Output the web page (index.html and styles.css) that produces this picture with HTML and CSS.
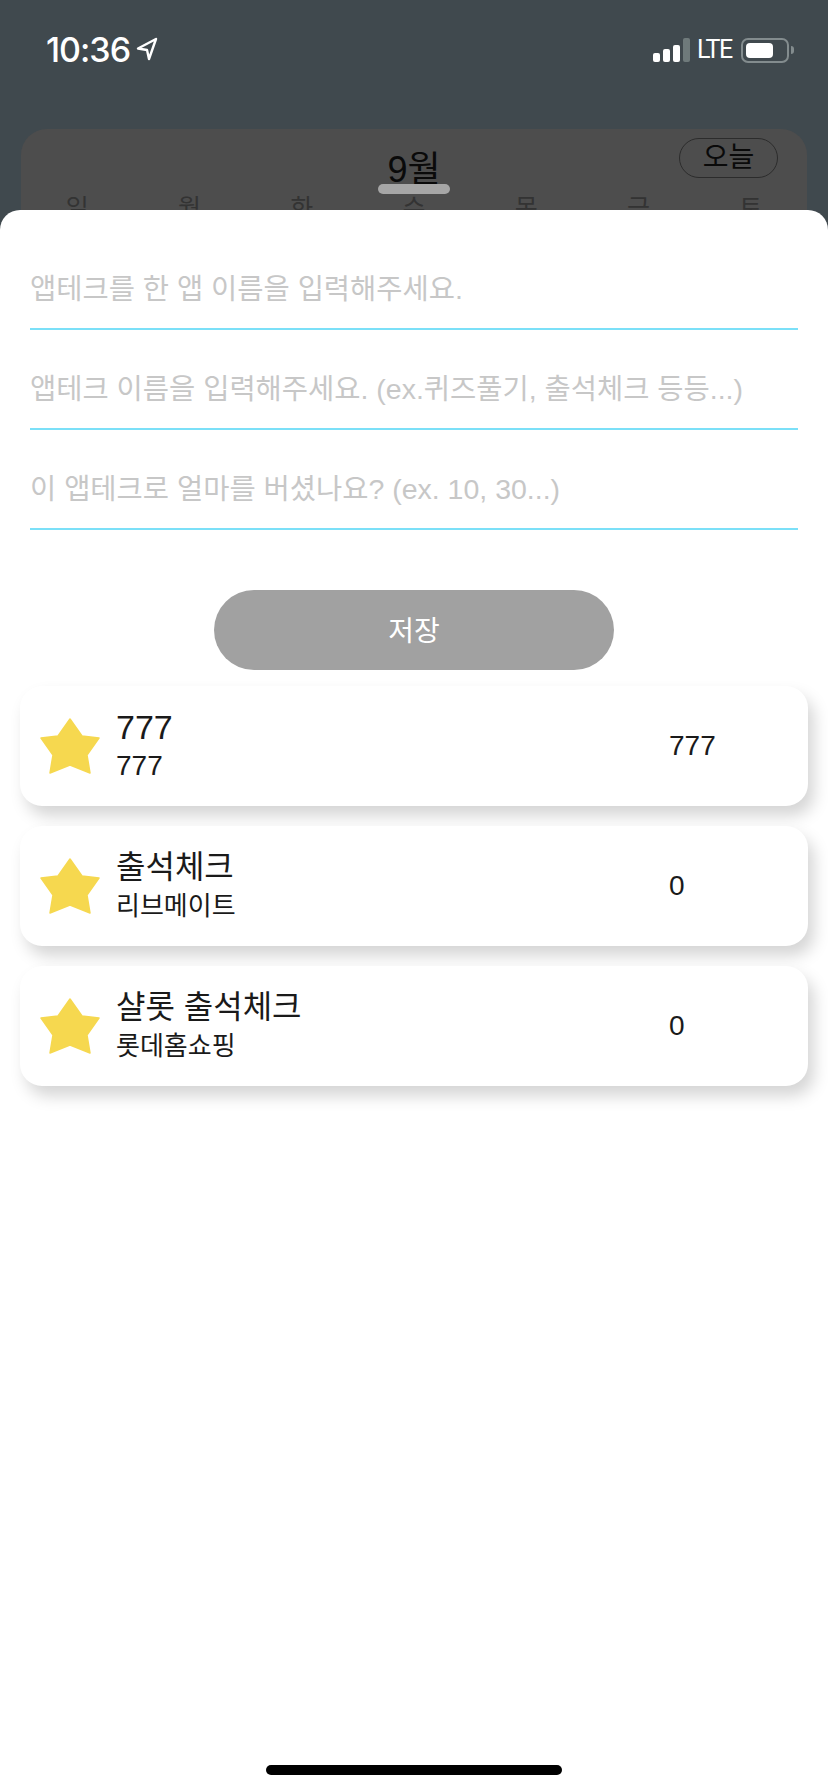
FILE: index.html
```html
<!DOCTYPE html>
<html lang="ko">
  <head>
    <meta charset="UTF-8" />
    <meta name="viewport" content="width=device-width, initial-scale=1.0" />
    <title>앱테크</title>
    <link rel="stylesheet" href="styles.css">
  </head>
  <body>
    <div class="backdrop">
      <div class="status">
        <div class="status-left">
          <span class="time">10:36</span>
          <svg class="arrow" width="22" height="24" viewBox="0 0 22 24">
            <path d="M20 2 L2 11.5 L11 13 L13 22 Z" fill="none" stroke="#fff" stroke-width="2.4" stroke-linejoin="round" />
          </svg>
        </div>
        <div class="status-right">
          <div class="signal">
            <span class="bar bar1"></span>
            <span class="bar bar2"></span>
            <span class="bar bar3"></span>
            <span class="bar bar4"></span>
          </div>
          <span class="lte">LTE</span>
          <div class="battery"><span class="battery-fill"></span></div>
          <span class="battery-nub"></span>
        </div>
      </div>

      <div class="calendar">
        <div class="calendar-head">
          <span class="month">9월</span>
          <span class="today">오늘</span>
        </div>
        <div class="weekdays">
          <span>일</span>
          <span>월</span>
          <span>화</span>
          <span>수</span>
          <span>목</span>
          <span>금</span>
          <span>토</span>
        </div>
      </div>
      <div class="handle"></div>
    </div>

    <div class="sheet">
      <div class="field">앱테크를 한 앱 이름을 입력해주세요.</div>
      <div class="field">앱테크 이름을 입력해주세요. (ex.퀴즈풀기, 출석체크 등등...)</div>
      <div class="field">이 앱테크로 얼마를 버셨나요? (ex. 10, 30...)</div>

      <div class="save">저장</div>

      <div class="list">
        <div class="item">
          <svg class="star" width="60" height="56" viewBox="0 0 60 56">
            <polygon points="30,1 42,18 59,20 47,37 50,55 30,47 10,55 13,37 1,20 18,18" />
          </svg>
          <div class="item-text">
            <div class="item-title num">777</div>
            <div class="item-sub num">777</div>
          </div>
          <div class="item-value">777</div>
        </div>
        <div class="item">
          <svg class="star" width="60" height="56" viewBox="0 0 60 56">
            <polygon points="30,1 42,18 59,20 47,37 50,55 30,47 10,55 13,37 1,20 18,18" />
          </svg>
          <div class="item-text">
            <div class="item-title">출석체크</div>
            <div class="item-sub">리브메이트</div>
          </div>
          <div class="item-value">0</div>
        </div>
        <div class="item">
          <svg class="star" width="60" height="56" viewBox="0 0 60 56">
            <polygon points="30,1 42,18 59,20 47,37 50,55 30,47 10,55 13,37 1,20 18,18" />
          </svg>
          <div class="item-text">
            <div class="item-title">샬롯 출석체크</div>
            <div class="item-sub">롯데홈쇼핑</div>
          </div>
          <div class="item-value">0</div>
        </div>
      </div>

      <div class="home-bar"></div>
    </div>
  </body>
</html>
```

FILE: styles.css
```css
* {
  padding: 0;
  margin: 0;
  box-sizing: border-box;
}

body {
  width: 828px;
  height: 1792px;
  overflow: hidden;
  display: flex;
  flex-direction: column;
  background-color: #40494e;
  font-family: "Liberation Sans", "Noto Sans CJK KR", sans-serif;
  color: #1a1a1a;
}

.backdrop {
  position: relative;
  height: 210px;
  overflow: hidden;
}

.status {
  height: 129px;
  padding: 33px 34px 0 46px;
  display: flex;
  justify-content: space-between;
  align-items: flex-start;
  color: #fff;
}

.status-left {
  display: flex;
  align-items: center;
  gap: 6px;
  height: 32px;
}

.time {
  font-family: Inter, sans-serif;
  font-size: 34px;
  font-weight: 500;
  letter-spacing: -1px;
}

.status-right {
  display: flex;
  align-items: center;
  height: 32px;
  margin-top: 1px;
}

.signal {
  display: flex;
  align-items: flex-end;
  gap: 3px;
  height: 24px;
  margin-right: 7px;
}

.bar {
  width: 7px;
  border-radius: 2px;
  background-color: #fff;
}

.bar1 {
  height: 9px;
}

.bar2 {
  height: 13px;
}

.bar3 {
  height: 17px;
}

.bar4 {
  height: 24px;
  background-color: #6f7a7b;
}

.lte {
  font-family: Roboto, sans-serif;
  font-size: 25px;
  width: 37px;
  margin-right: 7px;
  line-height: 24px;
  white-space: nowrap;
  letter-spacing: -1.5px;
}

.battery {
  width: 48px;
  height: 25px;
  padding: 3px;
  border: 2px solid #838c8e;
  border-radius: 7px;
}

.battery-fill {
  display: block;
  width: 27px;
  height: 100%;
  border-radius: 4px;
  background-color: #fff;
}

.battery-nub {
  width: 3px;
  height: 8px;
  margin-left: 2px;
  border-radius: 0 3px 3px 0;
  background-color: #838c8e;
}

.calendar {
  height: 120px;
  margin: 0 21px;
  border-radius: 26px 26px 0 0;
  background-color: #4d4d4d;
}

.calendar-head {
  position: relative;
  height: 64px;
  display: flex;
  justify-content: center;
}

.month {
  margin-top: 20px;
  font-size: 36px;
  line-height: 42px;
  color: #0a0a0a;
}

.today {
  position: absolute;
  top: 9px;
  right: 29px;
  width: 99px;
  height: 40px;
  border: 1px solid #2c2c2c;
  border-radius: 20px;
  font-size: 28px;
  line-height: 38px;
  text-align: center;
  color: #0a0a0a;
}

.weekdays {
  display: grid;
  grid-template-columns: repeat(7, 1fr);
  text-align: center;
  font-size: 25px;
  line-height: 30px;
  color: #333;
}

.handle {
  position: absolute;
  top: 184px;
  left: 378px;
  width: 72px;
  height: 10px;
  border-radius: 5px;
  background-color: #a6a6a6;
}

.sheet {
  position: relative;
  flex: 1;
  padding: 20px 30px 0;
  border-radius: 20px 20px 0 0;
  background-color: #fff;
}

.field {
  height: 100px;
  padding-top: 39px;
  border-bottom: 2px solid #7be0f8;
  font-size: 28.5px;
  line-height: 40px;
  color: #c7c7c7;
  white-space: nowrap;
}

.save {
  width: 400px;
  height: 80px;
  margin: 60px auto 0;
  border-radius: 40px;
  background-color: #a1a1a1;
  color: #fff;
  font-size: 28px;
  line-height: 83px;
  text-align: center;
}

.list {
  display: flex;
  flex-direction: column;
  gap: 20px;
  margin: 16px -10px 0;
}

.item {
  height: 120px;
  padding-left: 20px;
  display: flex;
  align-items: center;
  border-radius: 22px;
  background-color: #fff;
  box-shadow: 6px 10px 16px rgba(0, 0, 0, 0.17);
}

.star {
  flex-shrink: 0;
}

.star polygon {
  fill: #f6d84f;
  stroke: #f6d84f;
  stroke-width: 1.5;
  stroke-linejoin: round;
}

.item-text {
  flex: 1;
  margin: -3px 0 0 16px;
}

.item-title {
  font-size: 32px;
  line-height: 42px;
}

.item-sub {
  font-size: 26px;
  line-height: 36px;
}

.item-title.num {
  font-size: 34px;
}

.item-sub.num {
  font-size: 28px;
}

.item-value {
  width: 139px;
  font-size: 28px;
}

.home-bar {
  position: absolute;
  left: 266px;
  bottom: 17px;
  width: 296px;
  height: 10px;
  border-radius: 5px;
  background-color: #000;
}
```
